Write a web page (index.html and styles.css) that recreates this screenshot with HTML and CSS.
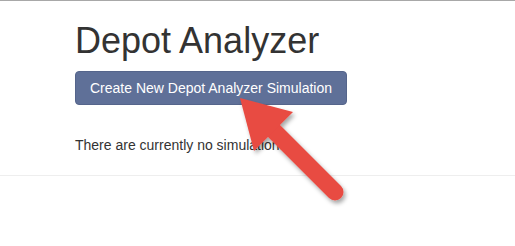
FILE: index.html
```html
<!DOCTYPE html>
<html>
<head>
<meta charset="utf-8">
<link rel="stylesheet" href="styles.css">
</head>
<body>
<div class="page">
  <div class="container">
    <h1 class="title">Depot Analyzer</h1>
    <div class="actions">
      <button class="btn">Create New Depot Analyzer Simulation</button>
    </div>
    <p class="empty">There are currently no simulations.</p>
  </div>
  <hr class="divider">
  <svg class="arrow" width="515" height="246" viewBox="0 0 515 246">
    <defs>
      <filter id="sh" x="-20%" y="-20%" width="140%" height="140%">
        <feDropShadow dx="2" dy="3" stdDeviation="2" flood-color="#000" flood-opacity="0.35"/>
      </filter>
    </defs>
    <g filter="url(#sh)" fill="#e84b42">
      <line x1="335" y1="192" x2="272" y2="129" stroke="#e84b42" stroke-width="17" stroke-linecap="round"/>
      <polygon points="240,98 293,112 254,151"/>
    </g>
  </svg>
</div>
</body>
</html>
```

FILE: styles.css
```css
html, body {
  margin: 0;
  padding: 0;
  background: #fff;
}
html {
  height: 246px;
  overflow: hidden;
}
body {
  font-family: "Liberation Sans", Arial, sans-serif;
  font-size: 14px;
  line-height: 20px;
  color: #333;
  border-top: 1px solid #a8a8a8;
  height: 245px;
  overflow: hidden;
}
.page {
  position: relative;
  padding-top: 20px;
}
.container {
  padding: 0 75px;
}
.title {
  margin: 0 0 10px;
  font-size: 36px;
  font-weight: 400;
  line-height: 1.1;
  color: #333;
}
.actions {
  display: flex;
}
.btn {
  font-family: "Liberation Sans", Arial, sans-serif;
  font-size: 14px;
  line-height: 20px;
  padding: 6px 14px;
  color: #fff;
  background: #5f7098;
  border: 1px solid #55658b;
  border-radius: 4px;
}
.empty {
  margin: 30px 0 0;
}
.divider {
  margin: 20px 0 0;
  border: 0;
  border-top: 1px solid #eee;
}
.arrow {
  position: absolute;
  left: 0;
  top: -1px;
}
```
